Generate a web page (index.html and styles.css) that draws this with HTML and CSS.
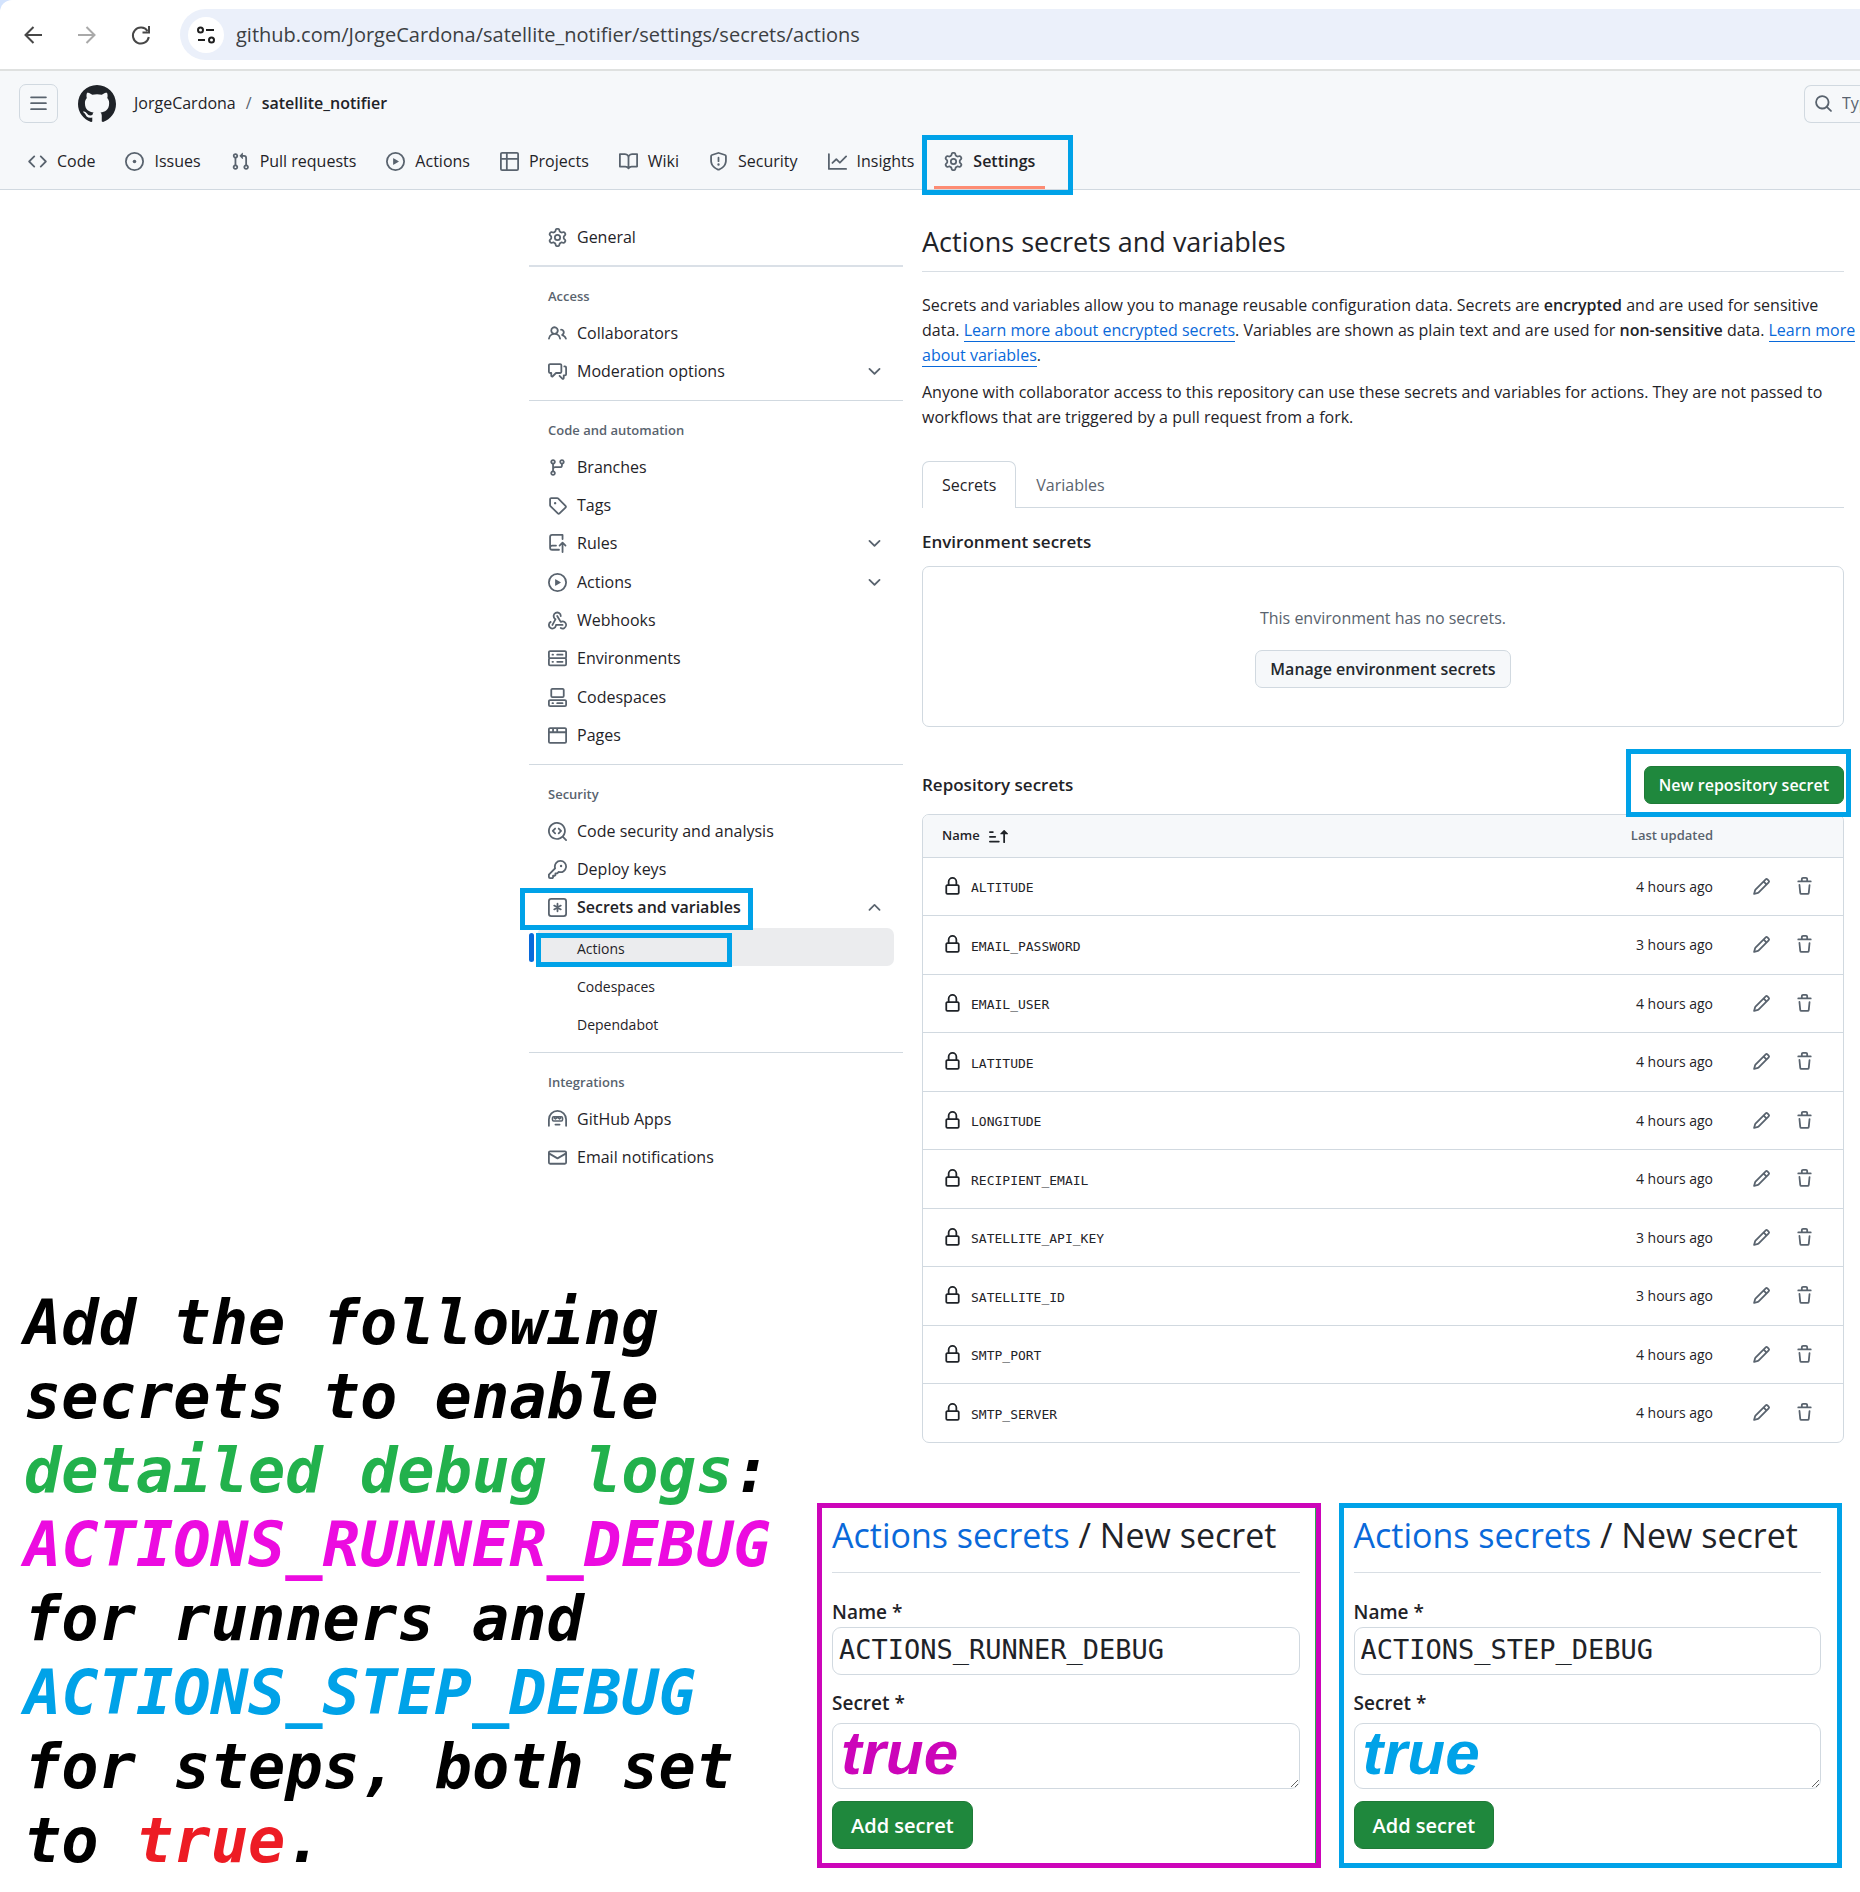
FILE: index.html
```html
<!DOCTYPE html>
<html lang="en">
<head>
<meta charset="utf-8">
<title>Actions secrets and variables</title>
<link rel="stylesheet" href="styles.css">
</head>
<body>
<svg class="sprite" aria-hidden="true">
  <symbol id="bars" viewBox="0 0 16 16"><path d="M1 2.75A.75.75 0 0 1 1.75 2h12.5a.75.75 0 0 1 0 1.5H1.75A.75.75 0 0 1 1 2.75Zm0 5A.75.75 0 0 1 1.75 7h12.5a.75.75 0 0 1 0 1.5H1.75A.75.75 0 0 1 1 7.75ZM1.75 12h12.5a.75.75 0 0 1 0 1.5H1.75a.75.75 0 0 1 0-1.5Z"/></symbol>
  <symbol id="mark-github" viewBox="0 0 16 16"><path d="M8 0c4.42 0 8 3.58 8 8a8.013 8.013 0 0 1-5.45 7.59c-.4.08-.55-.17-.55-.38 0-.27.01-1.13.01-2.2 0-.75-.25-1.23-.54-1.48 1.78-.2 3.65-.88 3.65-3.95 0-.88-.31-1.59-.82-2.15.08-.2.36-1.02-.08-2.12 0 0-.67-.22-2.2.82-.64-.18-1.32-.27-2-.27-.68 0-1.36.09-2 .27-1.53-1.03-2.2-.82-2.2-.82-.44 1.1-.16 1.92-.08 2.12-.51.56-.82 1.28-.82 2.15 0 3.06 1.86 3.75 3.64 3.95-.23.2-.44.55-.51 1.07-.46.21-1.61.55-2.33-.66-.15-.24-.6-.83-1.23-.82-.67.01-.27.38.01.53.34.19.73.9.82 1.13.16.45.68 1.31 2.69.94 0 .67.01 1.3.01 1.49 0 .21-.15.45-.55.38A7.995 7.995 0 0 1 0 8c0-4.42 3.58-8 8-8Z"/></symbol>
  <symbol id="code" viewBox="0 0 16 16"><path d="m11.28 3.22 4.25 4.25a.75.75 0 0 1 0 1.06l-4.25 4.25a.749.749 0 0 1-1.275-.326.749.749 0 0 1 .215-.734L13.94 8l-3.72-3.72a.749.749 0 0 1 .326-1.275.749.749 0 0 1 .734.215Zm-6.56 0a.751.751 0 0 1 1.042.018.751.751 0 0 1 .018 1.042L2.06 8l3.72 3.72a.749.749 0 0 1-.326 1.275.749.749 0 0 1-.734-.215L.47 8.53a.75.75 0 0 1 0-1.06Z"/></symbol>
  <symbol id="issue" viewBox="0 0 16 16"><path d="M8 9.5a1.5 1.5 0 1 0 0-3 1.5 1.5 0 0 0 0 3Z"/><path d="M8 0a8 8 0 1 1 0 16A8 8 0 0 1 8 0ZM1.5 8a6.5 6.5 0 1 0 13 0 6.5 6.5 0 0 0-13 0Z"/></symbol>
  <symbol id="pull" viewBox="0 0 16 16"><path d="M1.5 3.25a2.25 2.25 0 1 1 3 2.122v5.256a2.251 2.251 0 1 1-1.5 0V5.372A2.25 2.25 0 0 1 1.5 3.25Zm5.677-.177L9.573.677A.25.25 0 0 1 10 .854V2.5h1A2.5 2.5 0 0 1 13.5 5v5.628a2.251 2.251 0 1 1-1.5 0V5a1 1 0 0 0-1-1h-1v1.646a.25.25 0 0 1-.427.177L7.177 3.427a.25.25 0 0 1 0-.354ZM3.75 2.5a.75.75 0 1 0 0 1.5.75.75 0 0 0 0-1.5Zm0 9.5a.75.75 0 1 0 0 1.5.75.75 0 0 0 0-1.5Zm8.25.75a.75.75 0 1 0 1.5 0 .75.75 0 0 0-1.5 0Z"/></symbol>
  <symbol id="play" viewBox="0 0 16 16"><path d="M8 0a8 8 0 1 1 0 16A8 8 0 0 1 8 0ZM1.5 8a6.5 6.5 0 1 0 13 0 6.5 6.5 0 0 0-13 0Zm4.879-2.773 4.264 2.559a.25.25 0 0 1 0 .428l-4.264 2.559A.25.25 0 0 1 6 10.559V5.442a.25.25 0 0 1 .379-.215Z"/></symbol>
  <symbol id="table" viewBox="0 0 16 16"><path d="M0 1.75C0 .784.784 0 1.75 0h12.5C15.216 0 16 .784 16 1.75v12.5A1.75 1.75 0 0 1 14.25 16H1.75A1.75 1.75 0 0 1 0 14.25ZM6.5 6.5v8h7.75a.25.25 0 0 0 .25-.25V6.5Zm8-1.5V1.75a.25.25 0 0 0-.25-.25H6.5V5Zm-13 1.5v7.75c0 .138.112.25.25.25H5v-8ZM5 5V1.5H1.75a.25.25 0 0 0-.25.25V5Z"/></symbol>
  <symbol id="book" viewBox="0 0 16 16"><path d="M0 1.75A.75.75 0 0 1 .75 1h4.253c1.227 0 2.317.59 3 1.501A3.743 3.743 0 0 1 11.006 1h4.245a.75.75 0 0 1 .75.75v10.5a.75.75 0 0 1-.75.75h-4.507a2.25 2.25 0 0 0-1.591.659l-.622.621a.75.75 0 0 1-1.06 0l-.622-.621A2.25 2.25 0 0 0 5.258 13H.75a.75.75 0 0 1-.75-.75Zm7.251 10.324.004-5.073-.002-2.253A2.25 2.25 0 0 0 5.003 2.5H1.5v9h3.757a3.75 3.75 0 0 1 1.994.574ZM8.755 4.75l-.004 7.322a3.752 3.752 0 0 1 1.992-.572H14.5v-9h-3.495a2.25 2.25 0 0 0-2.25 2.25Z"/></symbol>
  <symbol id="shield" viewBox="0 0 16 16"><path d="M7.467.133a1.748 1.748 0 0 1 1.066 0l5.25 1.68A1.75 1.75 0 0 1 15 3.48V7c0 1.566-.32 3.182-1.303 4.682-.983 1.498-2.585 2.813-5.032 3.855a1.697 1.697 0 0 1-1.33 0c-2.447-1.042-4.049-2.357-5.032-3.855C1.32 10.182 1 8.566 1 7V3.48a1.75 1.75 0 0 1 1.217-1.667Zm.61 1.429a.25.25 0 0 0-.153 0l-5.25 1.68a.25.25 0 0 0-.174.238V7c0 1.358.275 2.666 1.057 3.86.784 1.194 2.121 2.34 4.366 3.297a.196.196 0 0 0 .154 0c2.245-.956 3.582-2.104 4.366-3.298C13.225 9.666 13.5 8.36 13.5 7V3.48a.251.251 0 0 0-.174-.237l-5.25-1.68ZM8.75 4.75v3a.75.75 0 0 1-1.5 0v-3a.75.75 0 0 1 1.5 0ZM9 10.5a1 1 0 1 1-2 0 1 1 0 0 1 2 0Z"/></symbol>
  <symbol id="graph" viewBox="0 0 16 16"><path d="M1.5 1.75V13.5h13.75a.75.75 0 0 1 0 1.5H.75a.75.75 0 0 1-.75-.75V1.75a.75.75 0 0 1 1.5 0Zm14.28 2.53-5.25 5.25a.75.75 0 0 1-1.06 0L7 7.06 4.28 9.78a.751.751 0 0 1-1.042-.018.751.751 0 0 1-.018-1.042l3.25-3.25a.75.75 0 0 1 1.06 0L10 7.94l4.72-4.72a.751.751 0 0 1 1.042.018.751.751 0 0 1 .018 1.042Z"/></symbol>
  <symbol id="gear" viewBox="0 0 16 16"><path d="M8 0a8.2 8.2 0 0 1 .701.031C9.444.095 9.99.645 10.16 1.29l.288 1.107c.018.066.079.158.212.224.231.114.454.243.668.386.123.082.233.09.299.071l1.103-.303c.644-.176 1.392.021 1.82.63.27.385.506.792.704 1.218.315.675.111 1.422-.364 1.891l-.814.806c-.049.048-.098.147-.088.294.016.257.016.515 0 .772-.01.147.038.246.088.294l.814.806c.475.469.679 1.216.364 1.891a7.977 7.977 0 0 1-.704 1.217c-.428.61-1.176.807-1.82.63l-1.102-.302c-.067-.019-.177-.011-.3.071a5.909 5.909 0 0 1-.668.386c-.133.066-.194.158-.211.224l-.29 1.106c-.168.646-.715 1.196-1.458 1.26a8.006 8.006 0 0 1-1.402 0c-.743-.064-1.289-.614-1.458-1.26l-.289-1.106c-.018-.066-.079-.158-.212-.224a5.738 5.738 0 0 1-.668-.386c-.123-.082-.233-.09-.299-.071l-1.103.303c-.644.176-1.392-.021-1.82-.63a8.12 8.12 0 0 1-.704-1.218c-.315-.675-.111-1.422.363-1.891l.815-.806c.05-.048.098-.147.088-.294a6.214 6.214 0 0 1 0-.772c.01-.147-.038-.246-.088-.294l-.815-.806C.635 6.045.431 5.298.746 4.623a7.92 7.92 0 0 1 .704-1.217c.428-.61 1.176-.807 1.82-.63l1.102.302c.067.019.177.011.3-.071.214-.143.437-.272.668-.386.133-.066.194-.158.211-.224l.29-1.106C6.009.645 6.556.095 7.299.03 7.53.01 7.764 0 8 0Zm-.571 1.525c-.036.003-.108.036-.137.146l-.289 1.105c-.147.561-.549.967-.998 1.189-.173.086-.34.183-.5.29-.417.278-.97.423-1.529.27l-1.103-.303c-.109-.03-.175.016-.195.045-.22.312-.412.644-.573.99-.014.031-.021.11.059.19l.815.806c.411.406.562.957.53 1.456a4.709 4.709 0 0 0 0 .582c.032.499-.119 1.05-.53 1.456l-.815.806c-.081.08-.073.159-.059.19.162.346.353.677.573.989.02.03.085.076.195.046l1.102-.303c.56-.153 1.113-.008 1.53.27.161.107.328.204.501.29.447.222.85.629.997 1.189l.289 1.105c.029.109.101.143.137.146a6.6 6.6 0 0 0 1.142 0c.036-.003.108-.036.137-.146l.289-1.105c.147-.561.549-.967.998-1.189.173-.086.34-.183.5-.29.417-.278.97-.423 1.529-.27l1.103.303c.109.029.175-.016.195-.045.22-.313.411-.644.573-.99.014-.031.021-.11-.059-.19l-.815-.806c-.411-.406-.562-.957-.53-1.456a4.709 4.709 0 0 0 0-.582c-.032-.499.119-1.05.53-1.456l.815-.806c.081-.08.073-.159.059-.19a6.464 6.464 0 0 0-.573-.989c-.02-.03-.085-.076-.195-.046l-1.102.303c-.56.153-1.113.008-1.53-.27a4.44 4.44 0 0 0-.501-.29c-.447-.222-.85-.629-.997-1.189l-.289-1.105c-.029-.11-.101-.143-.137-.146a6.6 6.6 0 0 0-1.142 0ZM11 8a3 3 0 1 1-6 0 3 3 0 0 1 6 0ZM9.5 8a1.5 1.5 0 1 0-3.001.001A1.5 1.5 0 0 0 9.5 8Z"/></symbol>
  <symbol id="search" viewBox="0 0 16 16"><path d="M10.68 11.74a6 6 0 0 1-7.922-8.982 6 6 0 0 1 8.982 7.922l3.04 3.04a.749.749 0 0 1-.326 1.275.749.749 0 0 1-.734-.215ZM11.5 7a4.499 4.499 0 1 0-8.997 0A4.499 4.499 0 0 0 11.5 7Z"/></symbol>
  <symbol id="people" viewBox="0 0 16 16"><path d="M2 5.5a3.5 3.5 0 1 1 5.898 2.549 5.508 5.508 0 0 1 3.034 4.084.75.75 0 1 1-1.482.235 4 4 0 0 0-7.9 0 .75.75 0 0 1-1.482-.236A5.507 5.507 0 0 1 3.102 8.05 3.493 3.493 0 0 1 2 5.5ZM11 4a3.001 3.001 0 0 1 2.22 5.018 5.01 5.01 0 0 1 2.56 3.012.749.749 0 0 1-.885.954.752.752 0 0 1-.549-.514 3.507 3.507 0 0 0-2.522-2.372.75.75 0 0 1-.574-.73v-.352a.75.75 0 0 1 .416-.672A1.5 1.5 0 0 0 11 5.5.75.75 0 0 1 11 4Zm-5.5-.5a2 2 0 1 0-.001 3.999A2 2 0 0 0 5.5 3.5Z"/></symbol>
  <symbol id="discussion" viewBox="0 0 16 16"><path d="M1.75 1h8.5c.966 0 1.75.784 1.75 1.75v5.5A1.75 1.75 0 0 1 10.25 10H7.061l-2.574 2.573A1.458 1.458 0 0 1 2 11.543V10h-.25A1.75 1.75 0 0 1 0 8.25v-5.5C0 1.784.784 1 1.75 1ZM1.5 2.75v5.5c0 .138.112.25.25.25h1a.75.75 0 0 1 .75.75v2.19l2.72-2.72a.749.749 0 0 1 .53-.22h3.5a.25.25 0 0 0 .25-.25v-5.5a.25.25 0 0 0-.25-.25h-8.5a.25.25 0 0 0-.25.25Zm13 2a.25.25 0 0 0-.25-.25h-.5a.75.75 0 0 1 0-1.5h.5c.966 0 1.75.784 1.75 1.75v5.5A1.75 1.75 0 0 1 14.25 12H14v1.543a1.458 1.458 0 0 1-2.487 1.03L9.22 12.28a.749.749 0 0 1 .326-1.275.749.749 0 0 1 .734.215l2.22 2.22v-2.19a.75.75 0 0 1 .75-.75h1a.25.25 0 0 0 .25-.25Z"/></symbol>
  <symbol id="branch" viewBox="0 0 16 16"><path d="M9.5 3.25a2.25 2.25 0 1 1 3 2.122V6A2.5 2.5 0 0 1 10 8.5H6a1 1 0 0 0-1 1v1.128a2.251 2.251 0 1 1-1.5 0V5.372a2.25 2.25 0 1 1 1.5 0v1.836A2.493 2.493 0 0 1 6 7h4a1 1 0 0 0 1-1v-.628A2.25 2.25 0 0 1 9.5 3.25Zm-6 0a.75.75 0 1 0 1.5 0 .75.75 0 0 0-1.5 0Zm8.25-.75a.75.75 0 1 0 0 1.5.75.75 0 0 0 0-1.5ZM4.25 12a.75.75 0 1 0 0 1.5.75.75 0 0 0 0-1.5Z"/></symbol>
  <symbol id="tag" viewBox="0 0 16 16"><path d="M1 7.775V2.75C1 1.784 1.784 1 2.75 1h5.025c.464 0 .91.184 1.238.513l6.25 6.25a1.75 1.75 0 0 1 0 2.474l-5.026 5.026a1.75 1.75 0 0 1-2.474 0l-6.25-6.25A1.752 1.752 0 0 1 1 7.775Zm1.5 0c0 .066.026.13.073.177l6.25 6.25a.25.25 0 0 0 .354 0l5.025-5.025a.25.25 0 0 0 0-.354l-6.25-6.25a.25.25 0 0 0-.177-.073H2.75a.25.25 0 0 0-.25.25ZM6 5a1 1 0 1 1 0 2 1 1 0 0 1 0-2Z"/></symbol>
  <symbol id="repo-push" viewBox="0 0 16 16"><path d="M1 2.5A2.5 2.5 0 0 1 3.5 0h8.75a.75.75 0 0 1 .75.75v3.5a.75.75 0 0 1-1.5 0V1.5h-8a1 1 0 0 0-1 1v6.708A2.493 2.493 0 0 1 3.5 9h3.25a.75.75 0 0 1 0 1.5H3.5a1 1 0 0 0 0 2h5.75a.75.75 0 0 1 0 1.5H3.5A2.5 2.5 0 0 1 1 11.5Zm13.23 7.79-1.23-1.224v6.184a.75.75 0 0 1-1.5 0V9.066L10.28 10.29a.75.75 0 0 1-1.06-1.061l2.505-2.504a.75.75 0 0 1 1.06 0L15.29 9.23a.751.751 0 0 1-.018 1.042.751.751 0 0 1-1.042.018Z"/></symbol>
  <symbol id="webhook" viewBox="0 0 16 16"><path d="M5.5 4.25a2.25 2.25 0 0 1 4.5 0 .75.75 0 0 0 1.5 0 3.75 3.75 0 1 0-6.14 2.889l-2.272 4.258a.75.75 0 0 0 1.324.706L7 7.25a.75.75 0 0 0-.309-1.015A2.25 2.25 0 0 1 5.5 4.25Z"/><path d="M7.364 3.607a.75.75 0 0 1 1.03.257l2.608 4.349a3.75 3.75 0 1 1-.628 6.785.75.75 0 0 1 .752-1.299 2.25 2.25 0 1 0-.033-3.88.75.75 0 0 1-1.03-.256L7.107 4.636a.75.75 0 0 1 .257-1.03Z"/><path d="M2.9 8.776A.75.75 0 0 1 2.625 9.8 2.25 2.25 0 1 0 6 11.75a.75.75 0 0 1 .75-.751h5.5a.75.75 0 0 1 0 1.5H7.425a3.751 3.751 0 1 1-5.55-3.998.75.75 0 0 1 1.024.274Z"/></symbol>
  <symbol id="server" viewBox="0 0 16 16"><path d="M1.75 1h12.5c.966 0 1.75.784 1.75 1.75v4c0 .372-.116.717-.314 1 .198.283.314.628.314 1v4a1.75 1.75 0 0 1-1.75 1.75H1.75A1.75 1.75 0 0 1 0 12.75v-4c0-.358.109-.707.314-1a1.739 1.739 0 0 1-.314-1v-4C0 1.784.784 1 1.75 1ZM1.5 2.75v4c0 .138.112.25.25.25h12.5a.25.25 0 0 0 .25-.25v-4a.25.25 0 0 0-.25-.25H1.75a.25.25 0 0 0-.25.25Zm.25 5.75a.25.25 0 0 0-.25.25v4c0 .138.112.25.25.25h12.5a.25.25 0 0 0 .25-.25v-4a.25.25 0 0 0-.25-.25ZM7 4.75A.75.75 0 0 1 7.75 4h4.5a.75.75 0 0 1 0 1.5h-4.5A.75.75 0 0 1 7 4.75ZM7.75 10h4.5a.75.75 0 0 1 0 1.5h-4.5a.75.75 0 0 1 0-1.5ZM3 4.75A.75.75 0 0 1 3.75 4h.5a.75.75 0 0 1 0 1.5h-.5A.75.75 0 0 1 3 4.75ZM3.75 10h.5a.75.75 0 0 1 0 1.5h-.5a.75.75 0 0 1 0-1.5Z"/></symbol>
  <symbol id="codespaces" viewBox="0 0 16 16"><path d="M0 11.25c0-.966.784-1.75 1.75-1.75h12.5c.966 0 1.75.784 1.75 1.75v3A1.75 1.75 0 0 1 14.25 16H1.75A1.75 1.75 0 0 1 0 14.25Zm2-9.5C2 .784 2.784 0 3.75 0h8.5C13.216 0 14 .784 14 1.75v5a1.75 1.75 0 0 1-1.75 1.75h-8.5A1.75 1.75 0 0 1 2 6.75Zm1.75-.25a.25.25 0 0 0-.25.25v5c0 .138.112.25.25.25h8.5a.25.25 0 0 0 .25-.25v-5a.25.25 0 0 0-.25-.25Zm-2 9.5a.25.25 0 0 0-.25.25v3c0 .138.112.25.25.25h12.5a.25.25 0 0 0 .25-.25v-3a.25.25 0 0 0-.25-.25Z"/><path d="M7 12.75a.75.75 0 0 1 .75-.75h4.5a.75.75 0 0 1 0 1.5h-4.5a.75.75 0 0 1-.75-.75Zm-4 0a.75.75 0 0 1 .75-.75h.5a.75.75 0 0 1 0 1.5h-.5a.75.75 0 0 1-.75-.75Z"/></symbol>
  <symbol id="browser" viewBox="0 0 16 16"><path d="M0 2.75C0 1.784.784 1 1.75 1h12.5c.966 0 1.75.784 1.75 1.75v10.5A1.75 1.75 0 0 1 14.25 15H1.75A1.75 1.75 0 0 1 0 13.25ZM14.5 6h-13v7.25c0 .138.112.25.25.25h12.5a.25.25 0 0 0 .25-.25Zm-6-3.5v2h6V2.75a.25.25 0 0 0-.25-.25ZM5 2.5v2h2v-2Zm-3.25 0a.25.25 0 0 0-.25.25V4.5h2v-2Z"/></symbol>
  <symbol id="codescan" viewBox="0 0 16 16"><path d="M8.47 4.97a.75.75 0 0 0 0 1.06L9.94 7.5 8.47 8.97a.75.75 0 1 0 1.06 1.06l2-2a.75.75 0 0 0 0-1.06l-2-2a.75.75 0 0 0-1.06 0ZM6.53 6.03a.75.75 0 0 0-1.06-1.06l-2 2a.75.75 0 0 0 0 1.06l2 2a.75.75 0 1 0 1.06-1.06L5.06 7.5l1.47-1.47Z"/><path d="M12.246 13.307a7.501 7.501 0 1 1 1.06-1.06l2.474 2.473a.749.749 0 0 1-.326 1.275.749.749 0 0 1-.734-.215ZM1.5 7.5a6.002 6.002 0 0 0 3.608 5.504 6.002 6.002 0 0 0 6.486-1.117.748.748 0 0 1 .292-.293A6 6 0 1 0 1.5 7.5Z"/></symbol>
  <symbol id="key" viewBox="0 0 16 16"><path d="M10.5 0a5.499 5.499 0 1 1-1.288 10.848l-.932.932a.749.749 0 0 1-.53.22H7v.75a.749.749 0 0 1-.22.53l-.5.5a.749.749 0 0 1-.53.22H5v.75a.749.749 0 0 1-.22.53l-.5.5a.749.749 0 0 1-.53.22h-2A1.75 1.75 0 0 1 0 14.25v-2c0-.199.079-.389.22-.53l4.932-4.932A5.5 5.5 0 0 1 10.5 0Zm-4 5.5c-.001.431.069.86.205 1.269a.75.75 0 0 1-.181.768L1.5 12.56v1.69c0 .138.112.25.25.25h1.69l.06-.06v-1.19a.75.75 0 0 1 .75-.75h1.19l.06-.06v-1.19a.75.75 0 0 1 .75-.75h1.19l1.023-1.025a.75.75 0 0 1 .768-.18A4 4 0 1 0 6.5 5.5ZM11 6a1 1 0 1 1 0-2 1 1 0 0 1 0 2Z"/></symbol>
  <symbol id="asterisk" viewBox="0 0 16 16"><path d="M0 2.75A2.75 2.75 0 0 1 2.75 0h10.5A2.75 2.75 0 0 1 16 2.75v10.5A2.75 2.75 0 0 1 13.25 16H2.75A2.75 2.75 0 0 1 0 13.25ZM2.75 1.5c-.69 0-1.25.56-1.25 1.25v10.5c0 .69.56 1.25 1.25 1.25h10.5c.69 0 1.25-.56 1.25-1.25V2.75c0-.69-.56-1.25-1.25-1.25Z"/><path d="M8 4.75v6.5M5.2 6.4l5.6 3.2M10.8 6.4 5.2 9.6" fill="none" stroke="currentColor" stroke-width="1.5" stroke-linecap="round"/></symbol>
  <symbol id="hubot" viewBox="0 0 16 16"><path d="M0 8a8 8 0 1 1 16 0v5.25a.75.75 0 0 1-1.5 0V8a6.5 6.5 0 1 0-13 0v5.25a.75.75 0 0 1-1.5 0Zm5.5 4.25a.75.75 0 0 1 .75-.75h3.5a.75.75 0 0 1 0 1.5h-3.5a.75.75 0 0 1-.75-.75Z"/><path d="M4.75 5.75h6.5a1 1 0 0 1 1 1v1.5a1 1 0 0 1-1 1h-6.5a1 1 0 0 1-1-1v-1.5a1 1 0 0 1 1-1ZM5 6.5 6.25 7.5 8 6.2l1.75 1.3L11 6.5" fill="none" stroke="currentColor" stroke-width="1.3" stroke-linejoin="round"/></symbol>
  <symbol id="mail" viewBox="0 0 16 16"><path d="M1.75 2h12.5c.966 0 1.75.784 1.75 1.75v8.5A1.75 1.75 0 0 1 14.25 14H1.75A1.75 1.75 0 0 1 0 12.25v-8.5C0 2.784.784 2 1.75 2ZM1.5 12.251c0 .138.112.25.25.25h12.5a.25.25 0 0 0 .25-.25V5.809L8.38 9.397a.75.75 0 0 1-.76 0L1.5 5.809v6.442Zm13-8.181v-.32a.25.25 0 0 0-.25-.25H1.75a.25.25 0 0 0-.25.25v.32L8 7.88Z"/></symbol>
  <symbol id="down" viewBox="0 0 16 16"><path d="M12.78 5.22a.749.749 0 0 1 0 1.06l-4.25 4.25a.749.749 0 0 1-1.06 0L3.22 6.28a.749.749 0 1 1 1.06-1.06L8 8.939l3.72-3.719a.749.749 0 0 1 1.06 0Z"/></symbol>
  <symbol id="up" viewBox="0 0 16 16"><path d="M3.22 10.53a.749.749 0 0 1 0-1.06l4.25-4.25a.749.749 0 0 1 1.06 0l4.25 4.25a.749.749 0 1 1-1.06 1.06L8 6.811 4.28 10.53a.749.749 0 0 1-1.06 0Z"/></symbol>
  <symbol id="lock" viewBox="0 0 16 16"><path d="M4 4a4 4 0 0 1 8 0v2h.25c.966 0 1.75.784 1.75 1.75v5.5A1.75 1.75 0 0 1 12.25 15h-8.5A1.75 1.75 0 0 1 2 13.25v-5.5C2 6.784 2.784 6 3.75 6H4Zm8.25 3.5h-8.5a.25.25 0 0 0-.25.25v5.5c0 .138.112.25.25.25h8.5a.25.25 0 0 0 .25-.25v-5.5a.25.25 0 0 0-.25-.25ZM10.5 6V4a2.5 2.5 0 1 0-5 0v2Z"/></symbol>
  <symbol id="pencil" viewBox="0 0 16 16"><path d="M11.013 1.427a1.75 1.75 0 0 1 2.474 0l1.086 1.086a1.75 1.75 0 0 1 0 2.474l-8.61 8.61c-.21.21-.47.364-.756.445l-3.251.93a.75.75 0 0 1-.927-.928l.929-3.25c.081-.286.235-.547.445-.758l8.61-8.61Zm.176 4.823L9.75 4.81l-6.286 6.287a.253.253 0 0 0-.064.108l-.558 1.953 1.953-.558a.253.253 0 0 0 .108-.064Zm1.238-3.763a.25.25 0 0 0-.354 0L10.811 3.75l1.439 1.44 1.263-1.263a.25.25 0 0 0 0-.354Z"/></symbol>
  <symbol id="trash" viewBox="0 0 16 16"><path d="M11 1.75V3h2.25a.75.75 0 0 1 0 1.5H2.75a.75.75 0 0 1 0-1.5H5V1.75C5 .784 5.784 0 6.75 0h2.5C10.216 0 11 .784 11 1.75ZM4.496 6.675l.66 6.6a.25.25 0 0 0 .249.225h5.19a.25.25 0 0 0 .249-.225l.66-6.6a.75.75 0 0 1 1.492.149l-.66 6.6A1.748 1.748 0 0 1 10.595 15h-5.19a1.75 1.75 0 0 1-1.741-1.575l-.66-6.6a.75.75 0 1 1 1.492-.15ZM6.5 1.75V3h3V1.75a.25.25 0 0 0-.25-.25h-2.5a.25.25 0 0 0-.25.25Z"/></symbol>
  <symbol id="sort" viewBox="0 0 16 16"><path d="m12.927 2.573 3 3A.25.25 0 0 1 15.75 6H13.5v6.75a.75.75 0 0 1-1.5 0V6H9.75a.25.25 0 0 1-.177-.427l3-3a.25.25 0 0 1 .354 0ZM0 12.25a.75.75 0 0 1 .75-.75h7.5a.75.75 0 0 1 0 1.5H.75a.75.75 0 0 1-.75-.75Zm0-4a.75.75 0 0 1 .75-.75h4.5a.75.75 0 0 1 0 1.5H.75A.75.75 0 0 1 0 8.25Zm0-4a.75.75 0 0 1 .75-.75h2.5a.75.75 0 0 1 0 1.5H.75A.75.75 0 0 1 0 4.25Z"/></symbol>
</svg>

<div class="browser">
  <div class="toolbar">
    <button class="tool" aria-label="Back"><svg viewBox="0 0 18 18"><path d="M9.5 1 1.5 9l8 8M1.5 9H18"/></svg></button>
    <button class="tool tool-off" aria-label="Forward"><svg viewBox="0 0 18 18"><path d="m8.5 1 8 8-8 8M16.500 9H0"/></svg></button>
    <button class="tool" aria-label="Reload"><svg viewBox="0 0 18 18"><path d="M15.5 5A8 8 0 1 0 16.800 11M17 0v6.500h-6.500"/></svg></button>
    <div class="omnibox">
      <button class="site-info" aria-label="Site information"><svg viewBox="0 0 20 20"><circle cx="4.5" cy="5" r="2.5"/><path d="M10 5h8M2 15h7"/><circle cx="15.5" cy="15" r="2.5"/></svg></button>
      <input class="url" aria-label="Address" value="github.com/JorgeCardona/satellite_notifier/settings/secrets/actions">
    </div>
  </div>
</div>

<header class="header">
  <div class="header-top">
    <button class="menu" aria-label="Open menu"><svg class="icon"><use href="#bars"/></svg></button>
    <a class="logo" href="#" aria-label="Homepage"><svg><use href="#mark-github"/></svg></a>
    <a class="crumb" href="#">JorgeCardona</a><span class="slash">/</span><a class="crumb crumb-repo" href="#">satellite_notifier</a>
    <div class="search"><svg class="icon"><use href="#search"/></svg><input aria-label="Search" placeholder="Type / to search"></div>
  </div>
  <nav class="tabs">
    <a href="#"><svg class="icon"><use href="#code"/></svg>Code</a>
    <a href="#"><svg class="icon"><use href="#issue"/></svg>Issues</a>
    <a href="#"><svg class="icon"><use href="#pull"/></svg>Pull requests</a>
    <a href="#"><svg class="icon"><use href="#play"/></svg>Actions</a>
    <a href="#"><svg class="icon"><use href="#table"/></svg>Projects</a>
    <a href="#"><svg class="icon"><use href="#book"/></svg>Wiki</a>
    <a href="#"><svg class="icon"><use href="#shield"/></svg>Security</a>
    <a href="#"><svg class="icon"><use href="#graph"/></svg>Insights</a>
    <a href="#" class="selected"><svg class="icon"><use href="#gear"/></svg>Settings<span class="mark mark-settings"></span></a>
  </nav>
</header>

<div class="page">
  <aside class="sidebar">
    <ul class="first"><li><a href="#"><svg class="icon"><use href="#gear"/></svg>General</a></li></ul>
    <section class="section-thick">
      <h3>Access</h3>
      <ul>
        <li><a href="#"><svg class="icon"><use href="#people"/></svg>Collaborators</a></li>
        <li><button><svg class="icon"><use href="#discussion"/></svg>Moderation options<svg class="icon chevron"><use href="#down"/></svg></button></li>
      </ul>
    </section>
    <section>
      <h3>Code and automation</h3>
      <ul>
        <li><a href="#"><svg class="icon"><use href="#branch"/></svg>Branches</a></li>
        <li><a href="#"><svg class="icon"><use href="#tag"/></svg>Tags</a></li>
        <li><button><svg class="icon"><use href="#repo-push"/></svg>Rules<svg class="icon chevron"><use href="#down"/></svg></button></li>
        <li><button><svg class="icon"><use href="#play"/></svg>Actions<svg class="icon chevron"><use href="#down"/></svg></button></li>
        <li><a href="#"><svg class="icon"><use href="#webhook"/></svg>Webhooks</a></li>
        <li><a href="#"><svg class="icon"><use href="#server"/></svg>Environments</a></li>
        <li><a href="#"><svg class="icon"><use href="#codespaces"/></svg>Codespaces</a></li>
        <li><a href="#"><svg class="icon"><use href="#browser"/></svg>Pages</a></li>
      </ul>
    </section>
    <section>
      <h3>Security</h3>
      <ul>
        <li><a href="#"><svg class="icon"><use href="#codescan"/></svg>Code security and analysis</a></li>
        <li><a href="#"><svg class="icon"><use href="#key"/></svg>Deploy keys</a></li>
        <li><button class="open"><svg class="icon"><use href="#asterisk"/></svg>Secrets and variables<svg class="icon chevron"><use href="#up"/></svg><span class="mark mark-secrets"></span></button>
          <ul class="sub">
            <li><a href="#" class="current">Actions<span class="mark mark-actions"></span></a></li>
            <li><a href="#">Codespaces</a></li>
            <li><a href="#">Dependabot</a></li>
          </ul>
        </li>
      </ul>
    </section>
    <section>
      <h3>Integrations</h3>
      <ul>
        <li><a href="#"><svg class="icon"><use href="#hubot"/></svg>GitHub Apps</a></li>
        <li><a href="#"><svg class="icon"><use href="#mail"/></svg>Email notifications</a></li>
      </ul>
    </section>
  </aside>

  <main class="main">
    <h1>Actions secrets and variables</h1>
    <p>Secrets and variables allow you to manage reusable configuration data. Secrets are <b>encrypted</b> and are used for sensitive data. <a href="#">Learn more about encrypted secrets</a>. Variables are shown as plain text and are used for <b>non-sensitive</b> data. <a href="#">Learn more about variables</a>.</p>
    <p>Anyone with collaborator access to this repository can use these secrets and variables for actions. They are not passed to workflows that are triggered by a pull request from a fork.</p>
    <nav class="subtabs"><a href="#" class="active">Secrets</a><a href="#">Variables</a></nav>

    <h2>Environment secrets</h2>
    <div class="blank">
      <span>This environment has no secrets.</span>
      <button class="btn">Manage environment secrets</button>
    </div>

    <div class="repo-head">
      <h2>Repository secrets</h2>
      <div class="marked"><button class="btn btn-green">New repository secret</button><span class="mark mark-new"></span></div>
    </div>
    <div class="table-box">
      <table>
        <thead><tr><th class="name">Name<svg class="icon"><use href="#sort"/></svg></th><th class="time">Last updated</th><th class="acts" aria-label="Manage"></th></tr></thead>
        <tbody>
          <tr><td class="name"><svg class="icon"><use href="#lock"/></svg><code>ALTITUDE</code></td><td class="time">4 hours ago</td><td class="acts"><button aria-label="Edit"><svg class="icon"><use href="#pencil"/></svg></button><button aria-label="Delete"><svg class="icon"><use href="#trash"/></svg></button></td></tr>
          <tr><td class="name"><svg class="icon"><use href="#lock"/></svg><code>EMAIL_PASSWORD</code></td><td class="time">3 hours ago</td><td class="acts"><button aria-label="Edit"><svg class="icon"><use href="#pencil"/></svg></button><button aria-label="Delete"><svg class="icon"><use href="#trash"/></svg></button></td></tr>
          <tr><td class="name"><svg class="icon"><use href="#lock"/></svg><code>EMAIL_USER</code></td><td class="time">4 hours ago</td><td class="acts"><button aria-label="Edit"><svg class="icon"><use href="#pencil"/></svg></button><button aria-label="Delete"><svg class="icon"><use href="#trash"/></svg></button></td></tr>
          <tr><td class="name"><svg class="icon"><use href="#lock"/></svg><code>LATITUDE</code></td><td class="time">4 hours ago</td><td class="acts"><button aria-label="Edit"><svg class="icon"><use href="#pencil"/></svg></button><button aria-label="Delete"><svg class="icon"><use href="#trash"/></svg></button></td></tr>
          <tr><td class="name"><svg class="icon"><use href="#lock"/></svg><code>LONGITUDE</code></td><td class="time">4 hours ago</td><td class="acts"><button aria-label="Edit"><svg class="icon"><use href="#pencil"/></svg></button><button aria-label="Delete"><svg class="icon"><use href="#trash"/></svg></button></td></tr>
          <tr><td class="name"><svg class="icon"><use href="#lock"/></svg><code>RECIPIENT_EMAIL</code></td><td class="time">4 hours ago</td><td class="acts"><button aria-label="Edit"><svg class="icon"><use href="#pencil"/></svg></button><button aria-label="Delete"><svg class="icon"><use href="#trash"/></svg></button></td></tr>
          <tr><td class="name"><svg class="icon"><use href="#lock"/></svg><code>SATELLITE_API_KEY</code></td><td class="time">3 hours ago</td><td class="acts"><button aria-label="Edit"><svg class="icon"><use href="#pencil"/></svg></button><button aria-label="Delete"><svg class="icon"><use href="#trash"/></svg></button></td></tr>
          <tr><td class="name"><svg class="icon"><use href="#lock"/></svg><code>SATELLITE_ID</code></td><td class="time">3 hours ago</td><td class="acts"><button aria-label="Edit"><svg class="icon"><use href="#pencil"/></svg></button><button aria-label="Delete"><svg class="icon"><use href="#trash"/></svg></button></td></tr>
          <tr><td class="name"><svg class="icon"><use href="#lock"/></svg><code>SMTP_PORT</code></td><td class="time">4 hours ago</td><td class="acts"><button aria-label="Edit"><svg class="icon"><use href="#pencil"/></svg></button><button aria-label="Delete"><svg class="icon"><use href="#trash"/></svg></button></td></tr>
          <tr><td class="name"><svg class="icon"><use href="#lock"/></svg><code>SMTP_SERVER</code></td><td class="time">4 hours ago</td><td class="acts"><button aria-label="Edit"><svg class="icon"><use href="#pencil"/></svg></button><button aria-label="Delete"><svg class="icon"><use href="#trash"/></svg></button></td></tr>
        </tbody>
      </table>
    </div>
  </main>

  <div class="note">Add the following<br>secrets to enable<br><span class="green">detailed debug logs</span>:<br><span class="magenta">ACTIONS_RUNNER_DEBUG</span><br>for runners and<br><span class="blue">ACTIONS_STEP_DEBUG</span><br>for steps, both set<br>to <span class="red">true</span>.</div>

  <div class="cards">
    <form class="card card-runner">
      <h2><a href="#">Actions secrets</a> / New secret</h2>
      <label for="name-runner">Name *</label>
      <input id="name-runner" value="ACTIONS_RUNNER_DEBUG">
      <label for="secret-runner">Secret *</label>
      <textarea id="secret-runner" spellcheck="false">true</textarea>
      <button type="button" class="btn btn-green btn-large">Add secret</button>
    </form>
    <form class="card card-step">
      <h2><a href="#">Actions secrets</a> / New secret</h2>
      <label for="name-step">Name *</label>
      <input id="name-step" value="ACTIONS_STEP_DEBUG">
      <label for="secret-step">Secret *</label>
      <textarea id="secret-step" spellcheck="false">true</textarea>
      <button type="button" class="btn btn-green btn-large">Add secret</button>
    </form>
  </div>
</div>
</body>
</html>
```
FILE: styles.css
```css
* { box-sizing: border-box; }
body {
  margin: 0;
  background: #fff;
  color: #1f2328;
  font: 16px/25px "Open Sans", "Noto Sans", sans-serif;
}
h1, h2, h3, p, ul { margin: 0; padding: 0; }
ul { list-style: none; }
a { color: inherit; text-decoration: none; }
button, input, textarea { font: inherit; color: inherit; margin: 0; }
button { padding: 0; border: 0; background: none; }
.sprite { display: none; }
.icon { width: 19px; height: 19px; flex: none; fill: currentColor; color: #59636e; }

/* outlines that point at the controls to use */
.mark { position: absolute; border: 5px solid #00a2e8; pointer-events: none; z-index: 2; }
.mark-settings { top: 3px; right: -28px; bottom: -6px; left: -12px; }
.mark-secrets { top: 0; right: 150px; bottom: -3px; left: -9px; }
.mark-actions { top: 5px; right: 162px; bottom: -1px; left: -1px; }
.mark-new { top: -17px; right: -7px; bottom: -13px; left: -18px; }

/* browser toolbar */
.browser { background: #d3e3fd; }
.toolbar {
  display: flex;
  align-items: center;
  gap: 36px;
  height: 71px;
  padding: 9px 0 9px 24px;
  border-bottom: 2px solid #dfe1e0;
  border-radius: 12px 0 0 0;
  background: #fff;
}
.tool { width: 18px; height: 18px; color: #474747; }
.tool svg, .site-info svg { display: block; width: 100%; height: 100%; overflow: visible; fill: none; stroke: currentColor; stroke-width: 2; }
.tool-off { color: #a9a9a9; }
.omnibox {
  display: flex;
  align-items: center;
  flex: 1;
  gap: 12px;
  height: 51px;
  margin-left: -6px;
  padding-left: 8px;
  border-radius: 26px 0 0 26px;
  background: #ebf0fa;
}
.site-info { width: 36px; height: 36px; padding: 8px; border-radius: 50%; background: #fff; color: #1f1f1f; }
.url { flex: 1; border: 0; outline: 0; padding: 0; background: none; font-size: 20px; color: #3c3f43; }

/* site header */
.header { border-bottom: 1px solid #d1d9e0; background: #f6f8fa; }
.header-top { display: flex; align-items: center; height: 61px; padding: 13px 0 9px 19px; }
.menu {
  display: grid;
  place-items: center;
  width: 39px;
  height: 39px;
  border: 1px solid #d1d9e0;
  border-radius: 7px;
}
.logo { width: 38px; height: 38px; margin: 0 18px 0 20px; }
.logo svg { display: block; width: 38px; height: 38px; fill: #1f2328; }
.slash { margin: 0 10px; color: #59636e; }
.crumb-repo { font-weight: 600; }
.search {
  display: flex;
  align-items: center;
  gap: 9px;
  width: 56px;
  height: 38px;
  margin-left: auto;
  padding-left: 9px;
  border: 1px solid #d1d9e0;
  border-right: 0;
  border-radius: 7px 0 0 7px;
  overflow: hidden;
}
.search input { width: 240px; flex: none; border: 0; padding: 0; background: none; }
.search input::placeholder { color: #59636e; opacity: 1; }
.tabs { display: flex; gap: 10px; height: 57px; padding-left: 18px; }
.tabs a { position: relative; display: flex; align-items: center; gap: 10px; padding: 2px 10px 0; }
.tabs .selected { font-weight: 600; }
.tabs .selected::after {
  content: "";
  position: absolute;
  right: 0;
  bottom: 0;
  left: 0;
  height: 3px;
  background: #fd8c73;
}

/* page */
.page {
  display: grid;
  grid-template-columns: minmax(0, 529fr) 288px 105px minmax(0, 922fr);
  grid-template-rows: auto 1fr auto;
  padding: 0 16px 24px 0;
}
.sidebar { grid-column: 2 / 4; grid-row: 1; margin-right: 19px; padding: 28px 0 100px; }
.main { grid-column: 4; grid-row: 1 / 3; padding: 32px 0 60px; }
.note { grid-column: 1 / 3; grid-row: 2 / 4; margin-bottom: -20px; padding-left: 24px; }
.cards { grid-column: 3 / 5; grid-row: 3; }

.sidebar .first { padding-bottom: 9px; }
.sidebar section { border-top: 1px solid #d1d9e0; padding: 11px 0 10px; }
.sidebar .section-thick { border-top: 2px solid #dae0e7; }
.sidebar h3 { padding-left: 19px; color: #59636e; font-size: 13px; line-height: 36px; font-weight: 600; }
.sidebar li a, .sidebar li button {
  position: relative;
  display: flex;
  align-items: center;
  gap: 10px;
  width: 100%;
  height: 38px;
  padding-left: 19px;
  text-align: left;
}
.sidebar section > ul > li:nth-child(3n) > :first-child { height: 39px; }
.sidebar .chevron { margin: 0 19px 0 auto; }
.sidebar .open { font-weight: 600; }
.sidebar .sub { padding-top: 1px; font-size: 14px; }
.sidebar .sub a { width: auto; margin: 0 9px 0 8px; padding: 2px 0 0 40px; border-radius: 7px; }
.sidebar .sub .current { background: #ebecee; }
.sidebar .sub .current::before {
  content: "";
  position: absolute;
  top: 5px;
  bottom: 4px;
  left: -8px;
  width: 5px;
  border-radius: 3px;
  background: #0969da;
}

.main h1 { height: 50px; border-bottom: 1px solid #d8dee4; font-size: 27px; line-height: 40px; font-weight: 400; margin-bottom: 21px; }
.main p { margin: 0 -12px 12px 0; }
.main b { font-weight: 600; }
.main p a { color: #0969da; border-bottom: 1px solid #0969da; }
.subtabs { display: flex; height: 47px; margin: 31px 0 20px; border-bottom: 1px solid #d1d9e0; }
.subtabs a { height: 47px; padding: 0 20px; line-height: 48px; color: #59636e; }
.subtabs .active {
  padding: 0 19px;
  border: 1px solid #d1d9e0;
  border-bottom: 0;
  border-radius: 7px 7px 0 0;
  background: #fff;
  color: #1f2328;
  line-height: 46px;
}
.main h2 { font-size: 17px; line-height: 28px; font-weight: 600; }
.blank {
  display: flex;
  flex-direction: column;
  align-items: center;
  gap: 19px;
  margin: 10px 0 39px;
  padding: 39px 0 38px;
  border: 1px solid #d1d9e0;
  border-radius: 7px;
  color: #59636e;
}
.btn {
  height: 38px;
  padding: 0 14px;
  border: 1px solid #d1d9e0;
  border-radius: 7px;
  background: #f6f8fa;
  color: #25292e;
  font-weight: 600;
}
.btn-green { border-color: #1f7a38; background: #1f883d; color: #fff; }
.repo-head { display: flex; align-items: center; justify-content: space-between; margin-bottom: 10px; }
.marked { position: relative; }
.table-box { border: 1px solid #d1d9e0; border-radius: 7px; overflow: hidden; }
table { width: 100%; border-collapse: collapse; }
th { height: 42px; background: #f6f8fa; font-size: 13px; font-weight: 600; text-align: left; }
th, td { padding: 0; }
td { height: 58px; border-top: 1px solid #d1d9e0; font-size: 14px; }
tr:nth-child(even) td { height: 59px; }
.name { padding-left: 19px; }
.name .icon { color: #1f2328; vertical-align: middle; }
th .icon { margin-left: 9px; }
td.name .icon { margin: 0 9px 3px 0; }
td.name { padding-left: 20px; }
code { font: 13px/19px "DejaVu Sans Mono", monospace; vertical-align: middle; }
.time { width: 120px; text-align: right; }
th.time { color: #59636e; }
.acts { width: 130px; }
.acts button { width: 43px; height: 38px; vertical-align: middle; }
.acts .icon { display: block; margin: auto; }
td.acts { padding-left: 27px; }

.note { font: italic bold 62px/74px "DejaVu Sans Mono", monospace; color: #000; white-space: nowrap; }
.green { color: #22b14c; }
.magenta { color: #ec0be0; }
.blue { color: #00a2e8; }
.red { color: #ed1c24; }

.cards { display: grid; grid-template-columns: 1fr 1fr; gap: 18px; padding-right: 2px; }
.card { display: flex; flex-direction: column; align-items: stretch; border: 5px solid; padding: 8px 16px 14px 10px; }
.card-runner { border-color: #cc05b9; box-shadow: inset -1px 0 #22b14c; }
.card-step { border-color: #00a2e8; }
.card h2 { height: 57px; margin-bottom: 24px; border-bottom: 1px solid #d8dee4; font-size: 34px; line-height: 38px; font-weight: 400; white-space: nowrap; }
.card h2 a { color: #0969da; }
.card label { font-size: 19px; line-height: 30px; font-weight: 600; }
.card input, .card textarea { width: 100%; border: 1px solid #d1d9e0; border-radius: 9px; outline: 0; background: #fff; }
.card input { height: 48px; margin-bottom: 13px; padding: 0 6px 4px; font: 27px/40px "DejaVu Sans Mono", monospace; }
.card textarea {
  height: 66px;
  margin: 5px 0 12px;
  padding: 0 8px;
  overflow: hidden;
  font: italic bold 62px/58px "Liberation Sans", sans-serif;
}
.card-runner textarea { color: #cc05b9; }
.card-step textarea { color: #00a2e8; }
.btn-large { align-self: flex-start; height: 48px; padding: 0 18px; border-radius: 9px; font-size: 20px; }
```
